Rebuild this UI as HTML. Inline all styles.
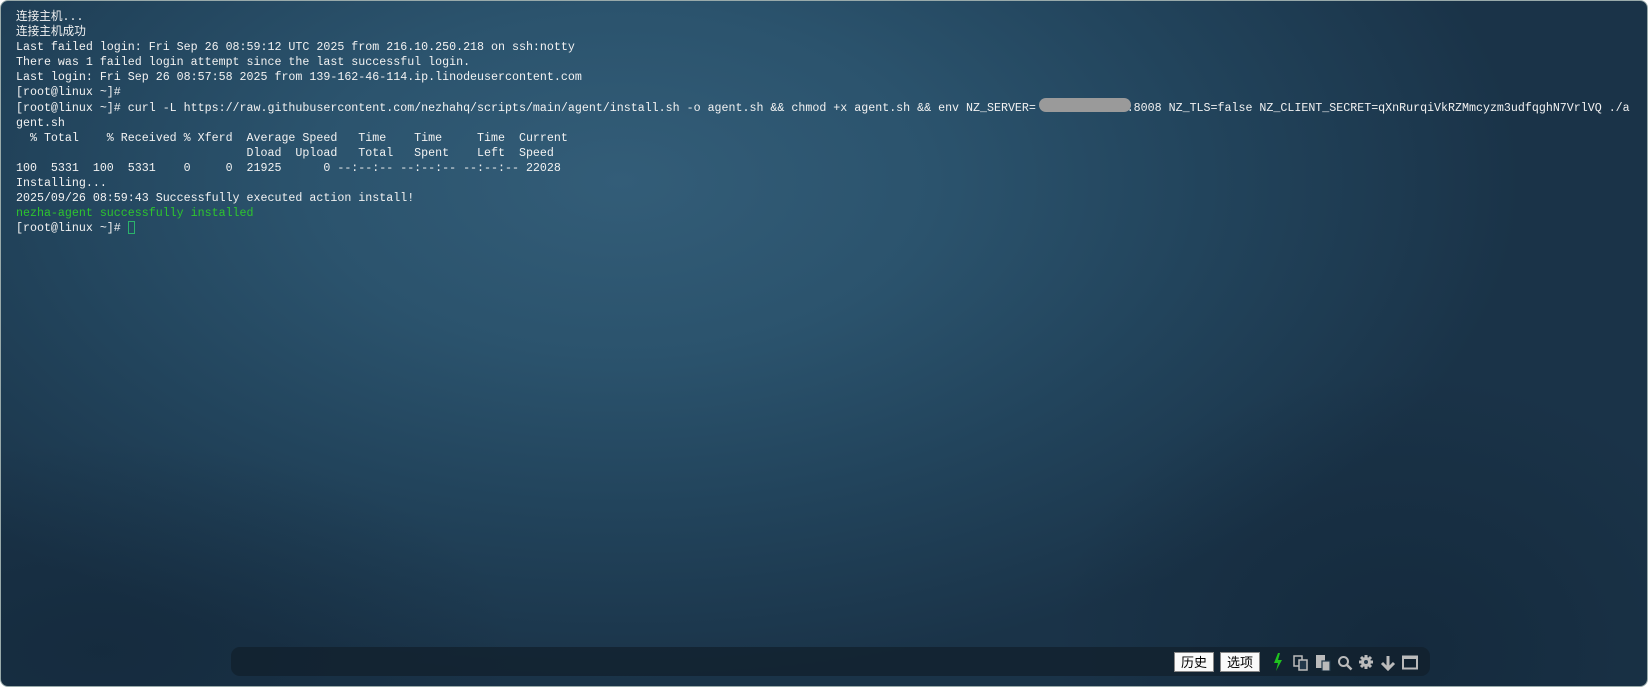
<!DOCTYPE html>
<html><head><meta charset="utf-8"><style>
html,body{margin:0;padding:0;background:#fff;}
.win{position:absolute;left:0;top:0;width:1646px;height:685px;border:1px solid #9aa;border-radius:8px;overflow:hidden;
background:radial-gradient(ellipse 900px 500px at 620px 180px,#335d78 0%,#2b536d 35%,#22445c 65%,#1a3348 100%);}
.win:after{content:"";position:absolute;inset:0;background:radial-gradient(ellipse 500px 400px at 1400px 650px,rgba(10,25,40,0.35),rgba(0,0,0,0) 70%),radial-gradient(ellipse 600px 300px at 100px 650px,rgba(10,25,40,0.3),rgba(0,0,0,0) 70%);}
pre{position:absolute;left:15px;top:9px;margin:0;font-family:"Liberation Mono","Noto Sans CJK SC",monospace;font-size:11.65px;line-height:15.1px;color:#f2f2f2;z-index:2;}
.g{color:#2ec52e}
.cur{display:inline-block;width:7px;height:13px;border:1px solid #2bb36b;vertical-align:-3px;box-sizing:border-box}
.red{position:absolute;left:1038px;top:97px;width:92px;height:14px;background:#9a9a9a;border-radius:7px;z-index:3}
.bar{position:absolute;left:230px;top:646px;width:1199px;height:29px;background:rgba(18,32,44,0.75);border-radius:9px;z-index:3}
.btn{position:absolute;top:651px;height:20px;width:40px;background:#fafafa;border:1px solid #888;box-sizing:border-box;font-family:"Noto Sans CJK SC",sans-serif;font-size:13px;line-height:18px;text-align:center;color:#000;z-index:4}
.ic{position:absolute;top:651px;z-index:4}
</style></head><body><div class="win">
<pre>连接主机...
连接主机成功
Last failed login: Fri Sep 26 08:59:12 UTC 2025 from 216.10.250.218 on ssh:notty
There was 1 failed login attempt since the last successful login.
Last login: Fri Sep 26 08:57:58 2025 from 139-162-46-114.ip.linodeusercontent.com
[root@linux ~]# 
[root@linux ~]# curl -L https://raw.githubusercontent.com/nezhahq/scripts/main/agent/install.sh -o agent.sh &amp;&amp; chmod +x agent.sh &amp;&amp; env NZ_SERVER=             :8008 NZ_TLS=false NZ_CLIENT_SECRET=qXnRurqiVkRZMmcyzm3udfqghN7VrlVQ ./a
gent.sh
  % Total    % Received % Xferd  Average Speed   Time    Time     Time  Current
                                 Dload  Upload   Total   Spent    Left  Speed
100  5331  100  5331    0     0  21925      0 --:--:-- --:--:-- --:--:-- 22028
Installing...
2025/09/26 08:59:43 Successfully executed action install!
<span class="g">nezha-agent successfully installed</span>
[root@linux ~]# <span class="cur"></span></pre>
<div class="red"></div>
<div class="bar"></div>
<div class="btn" style="left:1173px">历史</div>
<div class="btn" style="left:1219px">选项</div>
<svg class="ic" style="left:1271px" width="12" height="20" viewBox="0 0 12 20"><path d="M6 1 L2 11 L6 11 L4 19 L10 8 L6 8 L8 1Z" fill="#1fc21f"/></svg>
<svg class="ic" style="left:1292px;top:654px" width="16" height="16" viewBox="0 0 16 16"><rect x="1" y="1" width="8" height="10" fill="none" stroke="#bbb" stroke-width="1.5"/><rect x="6" y="5" width="8" height="10" fill="#22384a" stroke="#bbb" stroke-width="1.5"/></svg>
<svg class="ic" style="left:1314px;top:654px" width="16" height="16" viewBox="0 0 16 16"><rect x="1" y="0" width="9" height="13" fill="#bbb"/><rect x="7" y="6" width="8" height="10" fill="#bbb" stroke="#22384a" stroke-width="1.2"/></svg>
<svg class="ic" style="left:1336px;top:654px" width="16" height="16" viewBox="0 0 16 16"><circle cx="6.5" cy="6.5" r="4.5" fill="none" stroke="#bbb" stroke-width="2"/><path d="M10 10 L14.5 14.5" stroke="#bbb" stroke-width="2.5"/></svg>
<svg class="ic" style="left:1357px;top:653px" width="16" height="16" viewBox="0 0 16 16"><g stroke="#bbb" stroke-width="3"><path d="M8 1v14M1 8h14M3 3l10 10M13 3L3 13"/></g><circle cx="8" cy="8" r="5" fill="#bbb"/><circle cx="8" cy="8" r="2" fill="#22384a"/></svg>
<svg class="ic" style="left:1379px;top:654px" width="16" height="16" viewBox="0 0 16 16"><path d="M8 1v12M2 8l6 6 6-6" fill="none" stroke="#bbb" stroke-width="3"/></svg>
<svg class="ic" style="left:1401px;top:654px" width="16" height="15" viewBox="0 0 16 15"><rect x="1" y="1.5" width="14" height="12" fill="none" stroke="#bbb" stroke-width="2"/><rect x="1" y="1" width="14" height="3" fill="#bbb"/></svg>
</div></body></html>
